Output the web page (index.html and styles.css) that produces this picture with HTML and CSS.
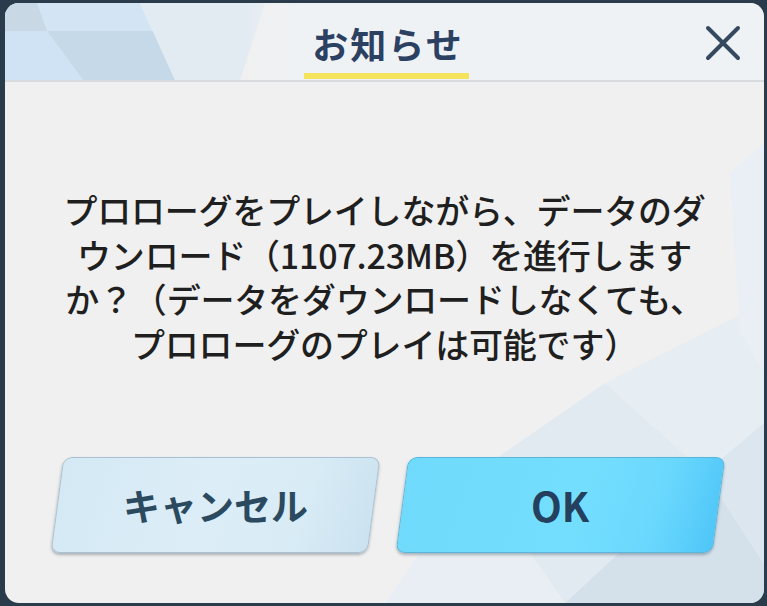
FILE: index.html
```html
<!DOCTYPE html>
<html lang="ja">
<head>
<meta charset="utf-8">
<title>お知らせ</title>
<link rel="stylesheet" href="styles.css">
</head>
<body>
<div class="dialog">
  <svg class="bg-art" viewBox="0 0 759 600" preserveAspectRatio="none" aria-hidden="true">
    <polygon points="0,0 135,0 170,77 0,77" fill="#d3e5f5"/>
    <polygon points="0,0 32,0 42,28 0,28" fill="#c8d8e5"/>
    <polygon points="42,28 148,28 170,77 78,77" fill="#c6d9e9"/>
    <polygon points="0,28 42,28 78,77 0,77" fill="#cfe3f4"/>
    <polygon points="135,0 260,0 235,77 170,77" fill="#e3ebf2"/>
    <polygon points="380,600 470,470 560,600" fill="#e8eef3"/>
    <polygon points="470,470 600,380 700,470 560,600" fill="#e2eaf1"/>
    <polygon points="560,600 700,470 759,560 759,600" fill="#d4e1eb"/>
    <polygon points="600,380 759,300 759,560 700,470" fill="#e6edf3"/>
    <polygon points="700,470 759,420 759,560" fill="#dbe6ef"/>
    <polygon points="725,170 759,140 759,370 735,330" fill="#e9eff4"/>
  </svg>
  <header class="head">
    <h1 class="title">お知らせ</h1>
    <button class="close" aria-label="閉じる">
      <svg viewBox="0 0 36 36" width="36" height="36"><path d="M3 3 L33 33 M33 3 L3 33" stroke="#34485e" stroke-width="4" stroke-linecap="round" fill="none"/></svg>
    </button>
  </header>
  <main class="content">
    <p class="message">プロローグをプレイしながら、データのダ<br>ウンロード（1107.23MB）を進行します<br>か？（データをダウンロードしなくても、<br>プロローグのプレイは可能です）</p>
    <div class="actions">
      <button class="btn btn-cancel"><span>キャンセル</span></button>
      <button class="btn btn-ok"><span>OK</span></button>
    </div>
  </main>
</div>
</body>
</html>
```
FILE: styles.css
```css
* { box-sizing: border-box; }
html, body { margin: 0; padding: 0; }
body {
  width: 767px;
  height: 606px;
  background: #2a3b4b;
  font-family: "Noto Sans CJK JP", "Noto Sans", sans-serif;
  padding: 3px 3px 3px 5px;
}
.dialog {
  position: relative;
  width: 759px;
  height: 600px;
  border-radius: 14px;
  overflow: hidden;
  background: #f0f0f0;
  display: flex;
  flex-direction: column;
}
.bg-art {
  position: absolute;
  inset: 0;
  width: 100%;
  height: 100%;
}
.head {
  position: relative;
  height: 79px;
  flex: none;
  display: flex;
  justify-content: center;
  align-items: flex-start;
  border-bottom: 2px solid #d8dbde;
  background: linear-gradient(90deg, rgba(238,242,245,0) 0, rgba(238,242,245,0) 240px, #eef2f5 300px);
}
.title {
  margin: 16px 0 0 4px;
  padding: 0 5px 0 8px;
  font-size: 36px;
  font-weight: 700;
  letter-spacing: 2px;
  line-height: 48px;
  color: #2c4161;
  border-bottom: 6px solid #f6e35c;
  height: 60px;
}
.close {
  position: absolute;
  right: 23px;
  top: 22px;
  width: 36px;
  height: 36px;
  padding: 0;
  border: 0;
  background: none;
}
.close svg { display: block; }
.content {
  position: relative;
  flex: 1;
  display: flex;
  flex-direction: column;
  align-items: center;
}
.message {
  margin: 106px 0 0 0;
  font-size: 34px;
  line-height: 44.5px;
  text-align: center;
  color: #1f1f1f;
  font-weight: 500;
  letter-spacing: -0.2px;
}
.actions {
  display: flex;
  gap: 28px;
  margin-top: 91px;
  padding-left: 6px;
}
.btn {
  width: 317px;
  height: 96px;
  border-radius: 9px;
  transform: skewX(-7.6deg);
  font-family: "Noto Sans CJK JP", "Noto Sans", sans-serif;
  font-weight: 700;
  cursor: pointer;
  display: flex;
  align-items: center;
  justify-content: center;
  box-shadow: 0 2px 3px rgba(40, 60, 80, 0.35);
}
.btn span { display: block; transform: skewX(7.6deg); }
.btn-cancel {
  background: linear-gradient(100deg, #d4e9f4 0%, #dcedf7 45%, #d9ecf6 75%, #cbe2f0 100%);
  border: 1px solid #a9c2d1;
  color: #2b4a5f;
  font-size: 37px;
}
.btn-ok {
  background: linear-gradient(100deg, #70dafc 0%, #74defe 55%, #6ad8fd 80%, #4fc6f8 100%);
  border: 1px solid #57b6da;
  color: #24405c;
  font-size: 40px;
}
```
